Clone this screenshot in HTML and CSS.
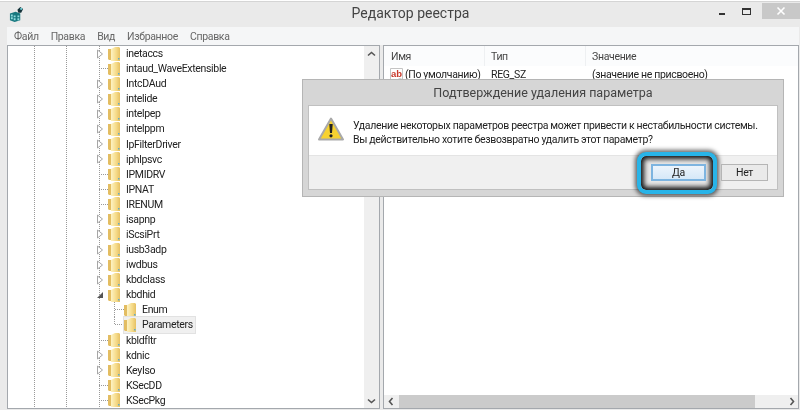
FILE: index.html
```html
<!DOCTYPE html>
<html>
<head>
    <title>Редактор реестра</title>
    <link rel="stylesheet" href="styles.css">
</head>
<body>
    <svg class="defs" width="0" height="0">
        <defs>
            <linearGradient id="folderFill" x1="0" y1="0" x2="1" y2="0">
                <stop offset="0" stop-color="#fdf3c4"/>
                <stop offset="0.55" stop-color="#f6dc8c"/>
                <stop offset="1" stop-color="#e6c163"/>
            </linearGradient>
            <symbol id="folder" viewBox="0 0 12 14">
                <path d="M0 2h4v11H1l-1-1z" fill="#e3bd62"/>
                <path d="M3 2l4-2h4l1 1v13H3z" fill="url(#folderFill)"/>
                <rect x="10" y="11" width="1.500" height="1.500" fill="#62acc4"/>
            </symbol>
            <symbol id="closed" viewBox="0 0 8 10">
                <path d="M1.500 1l5 4-5 4z" fill="#fff" stroke="#a6a6a6"/>
            </symbol>
            <symbol id="open" viewBox="0 0 8 10">
                <path d="M7 2v6H1z" fill="#555"/>
            </symbol>
        </defs>
    </svg>

    <div class="window">
        <header class="titlebar">
            <svg class="app-icon" width="15" height="15" viewBox="0 0 16 16">
                <path d="M1 7l6-2 5 2v7l-6 2-5-2z" fill="#17787f"/>
                <path d="M2 8h2v2H2zM5 9h2v2H5zM2 11h2v2H2zM5 12h2v2H5zM9 9h2v2H9zM9 12h2v2H9z" fill="#8fdbe0"/>
                <path d="M9 3l3-3 3 2-2 4-3 0z" fill="#14323a"/>
                <path d="M12 1h2v2h-2z" fill="#6fd2da"/>
            </svg>
            <h1 class="title">Редактор реестра</h1>
            <div class="controls">
                <span class="min"></span>
                <span class="max"></span>
                <span class="close">
                    <svg width="10" height="10" viewBox="0 0 10 10"><path d="M1.500 1.500l7 7M8.500 1.500l-7 7" stroke="#fff" stroke-width="1.600"/></svg>
                </span>
            </div>
        </header>

        <nav class="menu">
            <span>Файл</span>
            <span>Правка</span>
            <span>Вид</span>
            <span>Избранное</span>
            <span>Справка</span>
        </nav>

        <main class="panes">
            <section class="tree">
                <ul class="rows" id="rows"></ul>
                <div class="vscroll">
                    <svg width="9" height="6" viewBox="0 0 9 6"><path d="M1 4.500l3.500-3 3.500 3" fill="none" stroke="#555" stroke-width="1.600"/></svg>
                    <svg width="9" height="6" viewBox="0 0 9 6"><path d="M1 1.500l3.500 3 3.500-3" fill="none" stroke="#555" stroke-width="1.600"/></svg>
                </div>
            </section>

            <section class="values">
                <div class="columns">
                    <span class="col-name">Имя</span>
                    <span class="col-type">Тип</span>
                    <span class="col-value">Значение</span>
                </div>
                <div class="value-row">
                    <span class="col-name">
                        <svg class="ab" width="13" height="13" viewBox="0 0 13 13">
                            <path d="M.5.500h12v11l-3-1-3 2-3-1-3 0z" fill="#fff" stroke="#c4c4c4"/>
                            <text x="1" y="8.500" class="ab-text">ab</text>
                        </svg>(По умолчанию)
                    </span>
                    <span class="col-type">REG_SZ</span>
                    <span class="col-value">(значение не присвоено)</span>
                </div>
                <div class="hscroll">
                    <svg width="6" height="9" viewBox="0 0 6 9"><path d="M4.500 1l-3 3.500 3 3.500" fill="none" stroke="#555" stroke-width="1.600"/></svg>
                    <div class="thumb"></div>
                    <svg width="6" height="9" viewBox="0 0 6 9"><path d="M1.500 1l3 3.500-3 3.500" fill="none" stroke="#555" stroke-width="1.600"/></svg>
                </div>
            </section>
        </main>

        <div class="dialog">
            <div class="dialog-title">Подтверждение удаления параметра</div>
            <div class="dialog-inner">
                <div class="dialog-body">
                    <svg class="warn" width="26" height="24" viewBox="0 0 26 24">
                        <path d="M13 1.500L25 22.500H1z" fill="#f7d230" stroke="#a9a9a9" stroke-width="2" stroke-linejoin="round"/>
                        <path d="M11.300 7h3.400l-.7 9h-2z" fill="#222"/>
                        <circle cx="13" cy="18.800" r="1.600" fill="#222"/>
                    </svg>
                    <p>Удаление некоторых параметров реестра может привести к нестабильности системы.<br>Вы действительно хотите безвозвратно удалить этот параметр?</p>
                </div>
                <div class="dialog-footer">
                    <div class="highlight">
                        <button class="btn btn-yes">Да</button>
                    </div>
                    <button class="btn btn-no">Нет</button>
                </div>
            </div>
        </div>
    </div>

    <script>
        // name, indent level, arrow (closed / open / none), selected
        const items = [
            ['inetaccs', 0, 'closed'],
            ['intaud_WaveExtensible', 0, ''],
            ['IntcDAud', 0, 'closed'],
            ['intelide', 0, 'closed'],
            ['intelpep', 0, 'closed'],
            ['intelppm', 0, 'closed'],
            ['IpFilterDriver', 0, 'closed'],
            ['iphlpsvc', 0, 'closed'],
            ['IPMIDRV', 0, ''],
            ['IPNAT', 0, ''],
            ['IRENUM', 0, ''],
            ['isapnp', 0, 'closed'],
            ['iScsiPrt', 0, 'closed'],
            ['iusb3adp', 0, 'closed'],
            ['iwdbus', 0, 'closed'],
            ['kbdclass', 0, 'closed'],
            ['kbdhid', 0, 'open'],
            ['Enum', 1, ''],
            ['Parameters', 1, '', true],
            ['kbldfltr', 0, ''],
            ['kdnic', 0, 'closed'],
            ['KeyIso', 0, 'closed'],
            ['KSecDD', 0, ''],
            ['KSecPkg', 0, '']
        ];

        const rows = document.getElementById('rows');
        items.forEach(([name, level, arrow, selected]) => {
            const li = document.createElement('li');
            li.className = 'row level' + level + (selected ? ' last' : '');
            const icon = arrow
                ? `<svg class="arrow" width="8" height="10"><use href="#${arrow}"/></svg>`
                : '<span class="arrow branch"></span>';
            li.innerHTML = `${icon}<span class="item${selected ? ' selected' : ''}"><svg class="folder" width="12" height="14"><use href="#folder"/></svg><span>${name}</span></span>`;
            rows.appendChild(li);
        });
    </script>
</body>
</html>
```

FILE: styles.css
```css
* {
    box-sizing: border-box;
}
html, body {
    margin: 0;
    height: 410px;
    overflow: hidden;
}
body {
    font-family: Roboto, "Noto Sans", sans-serif;
    font-size: 10.500px;
    letter-spacing: -0.33px;
    color: #222;
    background: #fff;
}
.defs {
    position: absolute;
}
.window {
    position: relative;
    height: 409px;
    margin: 1px 0 0;
    padding: 0 1px 0 7px;
    background: #eaeaea;
    border-top: 1px solid #d5d5d5;
    filter: blur(0.3px);
}
.titlebar {
    display: flex;
    height: 25px;
}
.app-icon {
    margin: 5px 0 0 2px;
}
.title {
    flex: 1;
    margin: 0;
    padding: 1px 0 0 78px;
    text-align: center;
    font-size: 14px;
    font-weight: normal;
    letter-spacing: 0;
    color: #444;
    line-height: 20px;
}
.controls {
    margin-right: -1px;
    display: flex;
    align-items: flex-start;
}
.controls .min {
    width: 6px;
    height: 2px;
    margin: 11px 17px 0 0;
    background: #333;
}
.controls .max {
    width: 9px;
    height: 7px;
    margin: 6px 11px 0 0;
    border: 1px solid #333;
    border-top-width: 2px;
}
.controls .close {
    width: 38px;
    height: 16px;
    margin-top: 1px;
    background: #c8c8c8;
    display: flex;
    align-items: center;
    justify-content: center;
}
.menu {
    display: flex;
    gap: 12px;
    height: 18px;
    align-items: center;
    padding-left: 7px;
    background: #f5f6f7;
    color: #666;
}
.panes {
    display: flex;
    gap: 3px;
    height: 364px;
}
.tree {
    display: flex;
    width: 373px;
    background: #fff;
    border: 1px solid #a4a8ad;
    overflow: hidden;
}
.rows {
    flex: 1;
    list-style: none;
    margin: 0;
    padding: 0;
    background-image:
        repeating-linear-gradient(to bottom, #999 0 1px, transparent 1px 2px),
        repeating-linear-gradient(to bottom, #999 0 1px, transparent 1px 2px),
        repeating-linear-gradient(to bottom, #999 0 1px, transparent 1px 2px);
    background-size: 1px 100%;
    background-repeat: no-repeat;
    background-position: 26px 0, 58px 0, 91px 0;
}
.row {
    position: relative;
    display: flex;
    align-items: center;
    height: 15.090px;
    padding-left: 88px;
    line-height: 15px;
}
.row.level1 {
    padding-left: 104px;
}
/* vertical branch line of the open kbdhid node */
.row.level1::before {
    content: "";
    position: absolute;
    left: 106px;
    top: 0;
    width: 1px;
    height: 100%;
    background: repeating-linear-gradient(to bottom, #999 0 1px, transparent 1px 2px);
}
.row.last::before {
    height: 50%;
}
.arrow {
    width: 8px;
    height: 10px;
    flex: none;
    margin-right: 4px;
}
.branch {
    height: 1px;
    margin-left: 3px;
    width: 9px;
    margin-right: 0;
    background: repeating-linear-gradient(to right, #999 0 1px, transparent 1px 2px);
}
.item {
    display: flex;
    align-items: center;
    gap: 6px;
    height: 16px;
    padding-right: 2px;
}
.item.selected {
    background: #f0f0f0;
    outline: 1px solid #e2e2e2;
}
.folder {
    flex: none;
}
.vscroll {
    width: 15px;
    background: #efefef;
    display: flex;
    flex-direction: column;
    justify-content: space-between;
    align-items: center;
    padding: 5px 0 4px;
}
.values {
    flex: 1;
    position: relative;
    display: flex;
    flex-direction: column;
    background: #fff;
    border: 1px solid #a4a8ad;
}
.columns, .value-row {
    display: flex;
    align-items: center;
}
.columns {
    height: 20px;
    color: #444;
    background: #fbfcfd;
}
.columns .col-name {
    padding-left: 7px;
}
.columns .col-type, .columns .col-value {
    border-left: 1px solid #eef0f2;
    height: 100%;
    padding-left: 6px;
    display: flex;
    align-items: center;
}
.value-row {
    height: 16px;
}
.col-name {
    width: 100px;
    padding-left: 6px;
    display: flex;
    align-items: center;
    white-space: nowrap;
}
.col-type {
    width: 101px;
    padding-left: 7px;
}
.col-value {
    padding-left: 7px;
    white-space: nowrap;
}
.ab {
    margin-right: 2px;
}
.ab-text {
    font-family: "Liberation Sans", sans-serif;
    font-size: 9.500px;
    font-weight: bold;
    letter-spacing: 0;
    fill: #c8382a;
}
.hscroll {
    margin-top: auto;
    height: 13px;
    display: flex;
    align-items: center;
    gap: 5px;
    padding: 0 3px 0 4px;
    background: #efefef;
}
.thumb {
    width: 356px;
    height: 13px;
    background: #cbcbcb;
    margin-right: auto;
}
.dialog {
    position: absolute;
    left: 302px;
    top: 77px;
    width: 482px;
    height: 118px;
    padding: 0 5px 6px;
    background: #d6d6d6;
    border: 1px solid #b5b5b5;
}
.dialog-title {
    height: 25px;
    text-align: center;
    font-size: 12.500px;
    letter-spacing: 0;
    line-height: 26px;
    color: #444;
}
.dialog-inner {
    height: 85px;
    display: flex;
    flex-direction: column;
    border: 1px solid #c0c0c0;
}
.dialog-body {
    flex: 1;
    display: flex;
    align-items: flex-start;
    background: #fff;
    padding: 11px 0 0 9px;
}
.warn {
    flex: none;
}
.dialog-body p {
    margin: 2px 0 0 9px;
    line-height: 14px;
    white-space: nowrap;
}
.dialog-footer {
    height: 34px;
    display: flex;
    justify-content: flex-end;
    align-items: center;
    gap: 4px;
    padding: 0 9px 0 0;
    background: #f0f0f0;
    border-top: 1px solid #e4e4e4;
}
.highlight {
    padding: 8px 7px 9px 10px;
    margin: -4px 0;
    background: #e8e8e8;
    border: 4px solid #28b4e8;
    border-radius: 9px;
    box-shadow: 0 0 4px 2px rgba(0, 0, 0, 0.6), inset 0 0 5px 3px #111;
}
.btn {
    display: block;
    height: 17px;
    padding: 0;
    font: inherit;
    letter-spacing: inherit;
    color: #222;
    background: #eaeaea;
    border: 1px solid #b5b5b5;
}
.btn-no {
    width: 47px;
}
.btn-yes {
    width: 55px;
    background: linear-gradient(#ecf4fc, #d6e8f8);
    border: 2px solid #7db4e0;
}
```
